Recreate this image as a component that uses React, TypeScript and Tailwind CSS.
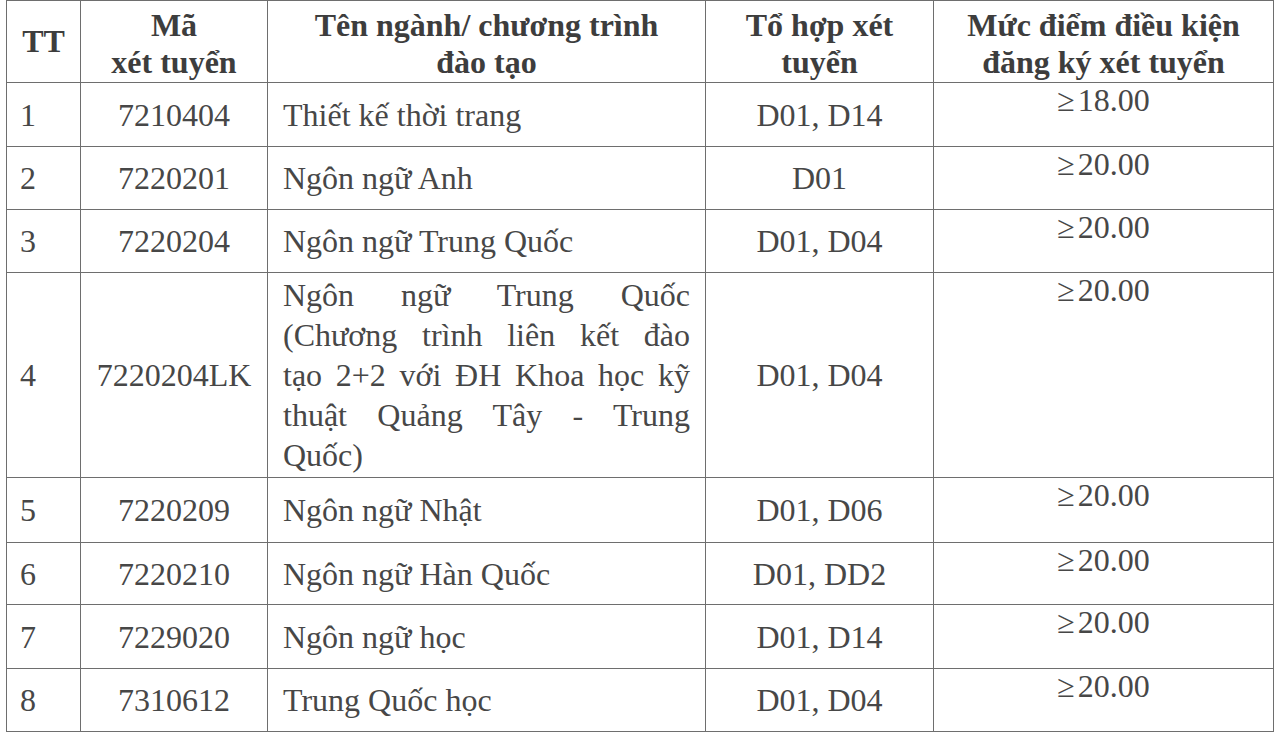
import React from 'react';

type Row = {
  tt: string;
  code: string;
  name: string[];
  combo: string;
  score: string;
  h: string;
};

const rows: Row[] = [
  { tt: '1', code: '7210404', name: ['Thiết kế thời trang'], combo: 'D01, D14', score: '18.00', h: 'h-[64px]' },
  { tt: '2', code: '7220201', name: ['Ngôn ngữ Anh'], combo: 'D01', score: '20.00', h: 'h-[63px]' },
  { tt: '3', code: '7220204', name: ['Ngôn ngữ Trung Quốc'], combo: 'D01, D04', score: '20.00', h: 'h-[63px]' },
  {
    tt: '4',
    code: '7220204LK',
    name: [
      'Ngôn ngữ Trung Quốc',
      '(Chương trình liên kết đào',
      'tạo 2+2 với ĐH Khoa học kỹ',
      'thuật Quảng Tây - Trung',
      'Quốc)',
    ],
    combo: 'D01, D04',
    score: '20.00',
    h: 'h-[205px]',
  },
  { tt: '5', code: '7220209', name: ['Ngôn ngữ Nhật'], combo: 'D01, D06', score: '20.00', h: 'h-[65px]' },
  { tt: '6', code: '7220210', name: ['Ngôn ngữ Hàn Quốc'], combo: 'D01, DD2', score: '20.00', h: 'h-[62px]' },
  { tt: '7', code: '7229020', name: ['Ngôn ngữ học'], combo: 'D01, D14', score: '20.00', h: 'h-[64px]' },
  { tt: '8', code: '7310612', name: ['Trung Quốc học'], combo: 'D01, D04', score: '20.00', h: 'h-[63px]' },
];

const cell = 'border border-[#6e6e6e] p-0';

export default function App() {
  return (
    <div className="min-h-screen bg-white font-['Liberation_Serif','Times_New_Roman',serif] text-[32px] text-[#474747]">
      <table className="ml-[6px] w-[1267px] table-fixed border-collapse">
        <colgroup>
          <col className="w-[74px]" />
          <col className="w-[187px]" />
          <col className="w-[438px]" />
          <col className="w-[228px]" />
          <col className="w-[340px]" />
        </colgroup>
        <thead>
          <tr className="h-[82px] text-center font-bold leading-[37px] text-[#3d3d3d]">
            <th className={`${cell} align-middle`}>TT</th>
            <th className={`${cell} pt-1 align-middle`}>
              Mã
              <br />
              xét tuyển
            </th>
            <th className={`${cell} pt-1 align-middle`}>
              Tên ngành/ chương trình
              <br />
              đào tạo
            </th>
            <th className={`${cell} pt-1 align-middle`}>
              Tổ hợp xét
              <br />
              tuyển
            </th>
            <th className={`${cell} pt-1 align-middle`}>
              Mức điểm điều kiện
              <br />
              đăng ký xét tuyển
            </th>
          </tr>
        </thead>
        <tbody className="leading-[40px]">
          {rows.map((r) => (
            <tr key={r.tt} className={r.h}>
              <td className={`${cell} pl-[13px] align-middle`}>{r.tt}</td>
              <td className={`${cell} text-center align-middle`}>{r.code}</td>
              <td className={`${cell} px-[15px] align-middle`}>
                {r.name.map((line, i) => (
                  <div
                    key={i}
                    className={
                      r.name.length > 1 && i < r.name.length - 1
                        ? 'text-justify [text-align-last:justify]'
                        : 'text-left'
                    }
                  >
                    {line}
                  </div>
                ))}
              </td>
              <td className={`${cell} text-center align-middle`}>{r.combo}</td>
              <td className={`${cell} pt-[1px] text-center align-top leading-[32px]`}>
                <span className="mr-[3px]">≥</span>
                {r.score}
              </td>
            </tr>
          ))}
        </tbody>
      </table>
    </div>
  );
}
